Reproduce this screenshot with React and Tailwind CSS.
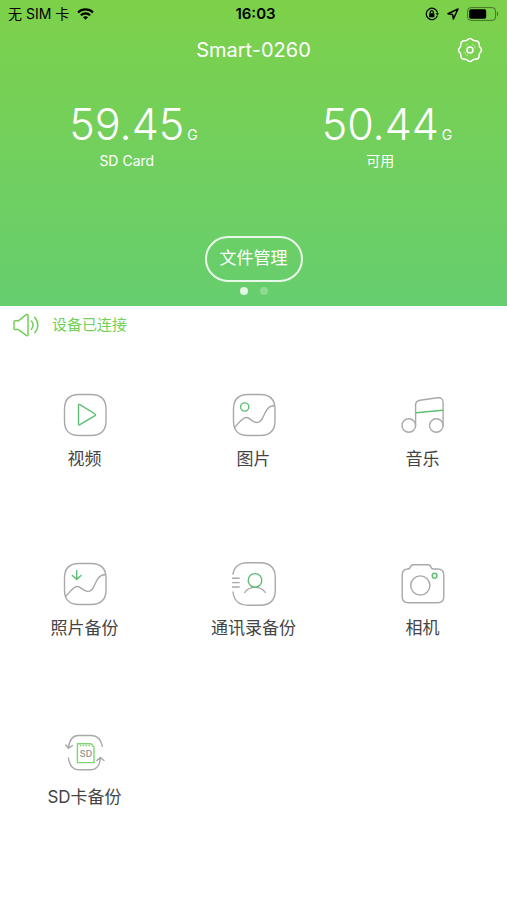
import React from "react";

const GREEN = "#5cbf72";
const GRAY = "#a9a9a9";

const STATS = [
  { value: "59.45", unit: "G", label: "SD Card" },
  { value: "50.44", unit: "G", label: "可用" },
];

const SQUIRCLE =
  "M16 1.5H28C38 1.5 43 6.5 43 16V28C43 38 38 42.5 28 42.5H16C6.5 42.5 1.5 38 1.5 28V16C1.5 6.5 6.5 1.5 16 1.5Z";
const WAVE = "M3 34C8 29 10 24.5 14.5 24.5C18 24.5 20 29.5 25 29.5C33 29.5 31 13 42.5 12.5";

const ToolIcon = ({ children }) => (
  <svg
    className="size-11"
    viewBox="0 0 44 44"
    fill="none"
    stroke={GRAY}
    strokeWidth="1.4"
    strokeLinecap="round"
    strokeLinejoin="round"
    aria-hidden="true"
  >
    {children}
  </svg>
);

const VideoIcon = () => (
  <ToolIcon>
    <path d={SQUIRCLE} />
    <path d="M15.5 12.4V31Q15.5 32.5 16.9 31.7L32 22.6Q33.2 21.8 32 21L17 11.6Q15.5 10.8 15.5 12.4Z" stroke={GREEN} />
  </ToolIcon>
);

const PictureIcon = () => (
  <ToolIcon>
    <path d={SQUIRCLE} />
    <path d={WAVE} />
    <circle cx="12.7" cy="14" r="4.1" stroke={GREEN} />
  </ToolIcon>
);

const MusicIcon = () => (
  <ToolIcon>
    <circle cx="7.8" cy="32.5" r="6.8" />
    <circle cx="35.3" cy="32.5" r="6.8" />
    <path d="M14.6 32.5V12C14.6 9 16.2 7.8 19 7.3L36.5 4.8C40 4.4 42.1 6 42.1 9.5V32.5" />
    <path d="M15.4 19.7L41.4 17.3" stroke={GREEN} />
  </ToolIcon>
);

const PhotoBackupIcon = () => (
  <ToolIcon>
    <path d={SQUIRCLE} />
    <path d={WAVE} />
    <path d="M13.7 8.8V17.4M9.4 13.4L13.7 17.6L18 13.4" stroke={GREEN} />
  </ToolIcon>
);

const ContactsIcon = () => (
  <ToolIcon>
    <path d="M1 12C2.5 4 7 0.8 16 0.8H28C38.5 0.8 43.3 5.5 43.3 16V28C43.3 38.5 38.5 43.2 28 43.2H16C7 43.2 2 38.5 1 30" />
    <path d="M0.6 16.2H7.2M0.6 20.6H7.2M0.6 25H7.2" />
    <path d="M12.7 30.5C17 23.6 29 23.6 33.3 30.5" />
    <circle cx="23" cy="18.4" r="6.8" stroke={GREEN} />
  </ToolIcon>
);

const CameraIcon = () => (
  <ToolIcon>
    <path d="M7 7C8.8 7 9 6.4 9.4 5C9.9 3.2 10.6 2.7 12.5 2.7H27C28.8 2.7 29.4 3.2 29.9 5C30.3 6.4 30.7 7 32.4 7H36.5C41 7 42.8 9 42.8 13V34.5C42.8 39 41 40.7 36.5 40.7H7.5C3 40.7 1.2 39 1.2 34.5V13C1.2 9 3 7 7 7Z" />
    <circle cx="19.3" cy="23.5" r="9.6" />
    <circle cx="33.6" cy="13.7" r="2.4" stroke={GREEN} />
  </ToolIcon>
);

const SdBackupIcon = () => (
  <ToolIcon>
    <path d="M5.4 16.8C6.4 9.5 9.5 4.5 15.5 4.5H28.5C34.5 4.5 38 9 39.4 15.4M2.8 14L5.4 17.2L9.4 14.6" />
    <path d="M5.4 27C6.4 34 10 38.8 16 38.8H27.5C33.5 38.8 37 34 37.4 27M33.8 29.6L37.4 26.4L41 29.6" />
    <path d="M14.4 12.8H28L31 16V31.6H14.4Z" stroke="#7bd86f" strokeLinejoin="miter" />
    <path d="M17 14.6H27" stroke="#7bd86f" strokeDasharray="1.4 1.4" strokeLinecap="butt" />
    <text
      x="23"
      y="25.6"
      textAnchor="middle"
      fontFamily="Inter, sans-serif"
      fontSize="9"
      fontWeight="600"
      fill="#9b9b9b"
      stroke="none"
    >
      SD
    </text>
  </ToolIcon>
);

const TOOLS = [
  { label: "视频", icon: VideoIcon },
  { label: "图片", icon: PictureIcon },
  { label: "音乐", icon: MusicIcon },
  { label: "照片备份", icon: PhotoBackupIcon },
  { label: "通讯录备份", icon: ContactsIcon },
  { label: "相机", icon: CameraIcon },
  { label: "SD卡备份", icon: SdBackupIcon },
];

const StatusBar = () => (
  <div className="grid grid-cols-3 items-center h-7 px-2 text-sm text-black">
    <div className="flex items-center gap-2">
      <span>无 SIM 卡</span>
      <svg className="w-[17px] h-3" viewBox="0 0 17 12" fill="none" stroke="#000" strokeWidth="2.1" aria-hidden="true">
        <path d="M1 4.4C5.2 0.4 11.8 0.4 16 4.4" />
        <path d="M3.8 7.2C6.4 4.8 10.6 4.8 13.2 7.2" />
        <path d="M8.5 11.8L6 9.2C7.3 7.9 9.7 7.9 11 9.2Z" fill="#000" stroke="none" />
      </svg>
    </div>
    <span className="pl-1 text-center text-[15px] font-semibold">16:03</span>
    <div className="flex items-center justify-end gap-2">
      <svg className="size-[14px]" viewBox="0 0 14 14" fill="none" stroke="#000" strokeWidth="1.2" aria-hidden="true">
        <path d="M12.4 8.6A5.7 5.7 0 1 1 12.5 5.6" />
        <path d="M10.6 6.2H14L12.4 8.6Z" fill="#000" stroke="none" />
        <rect x="4.2" y="6.2" width="5.2" height="4" rx="0.5" fill="#000" stroke="none" />
        <path d="M5.3 6.4V5.2A1.5 1.5 0 0 1 8.3 5.2V6.4" />
      </svg>
      <svg className="size-3" viewBox="0 0 12 12" fill="none" stroke="#000" strokeWidth="1.5" strokeLinejoin="round" aria-hidden="true">
        <path d="M11 1L1 5.8L5.6 6.4L6.4 11Z" />
      </svg>
      <svg className="w-8 h-[14px]" viewBox="0 0 32 14" fill="none" aria-hidden="true">
        <rect x="0.6" y="0.6" width="28" height="12.8" rx="3.4" stroke="#000" strokeOpacity="0.45" />
        <rect x="2.2" y="2.3" width="17" height="9.4" rx="1.6" fill="#000" />
        <path d="M30 4.6C31.6 5.4 31.6 8.6 30 9.4Z" fill="#000" fillOpacity="0.45" />
      </svg>
    </div>
  </div>
);

// ring with eight lobes
const GearIcon = () => (
  <svg className="size-[26px]" viewBox="0 0 26 26" fill="none" stroke="#fff" strokeWidth="1.6" strokeLinejoin="round" aria-hidden="true">
    <path d="M10.5 2.8Q13 0.2 15.5 2.8Q16.5 3.9 18.4 3.8Q22.1 3.9 22.2 7.6Q22.1 9.5 23.2 10.5Q25.8 13 23.2 15.5Q22.1 16.5 22.2 18.4Q22.1 22.1 18.4 22.2Q16.5 22.1 15.5 23.2Q13 25.8 10.5 23.2Q9.5 22.1 7.6 22.2Q3.9 22.1 3.8 18.4Q3.9 16.5 2.8 15.5Q0.2 13 2.8 10.5Q3.9 9.5 3.8 7.6Q3.9 3.9 7.6 3.8Q9.5 3.9 10.5 2.8Z" />
    <circle cx="13" cy="13" r="3" />
    <path d="M7.5 14.5A6.4 6.4 0 0 0 11 19M18.5 11.5A6.4 6.4 0 0 0 15 7M9 8.2L11 7" strokeWidth="0.6" strokeOpacity="0.7" />
  </svg>
);

const SpeakerIcon = () => (
  <svg className="w-[26px] h-6" viewBox="0 0 26 24" fill="none" stroke="#72cf58" strokeWidth="1.5" strokeLinecap="round" strokeLinejoin="round" aria-hidden="true">
    <path d="M2.2 7.8H5.4L13.2 1.6Q15 0.6 15 2.6V21.4Q15 23.4 13.2 22.4L5.4 16.6H2.2Q1 16.6 1 15.4V9Q1 7.8 2.2 7.8Z" />
    <path d="M18.4 8C20.4 10.4 20.4 13.8 18.4 16.2" />
    <path d="M21.8 4.4C25.8 8.8 25.8 15.4 21.8 19.8" />
  </svg>
);

const App = () => {
  return (
    <div className="min-h-screen bg-white font-[Inter,'Noto_Sans_CJK_SC',sans-serif]">
      <header className="bg-linear-to-b from-[#7dd149] to-[#66ce6e] text-white pb-[11px]">
        <StatusBar />

        <div className="grid grid-cols-[1fr_auto_1fr] items-center h-11 px-6">
          <h1 className="col-start-2 text-xl">Smart-0260</h1>
          <button type="button" aria-label="设置" className="justify-self-end">
            <GearIcon />
          </button>
        </div>

        <dl className="grid grid-cols-2 pt-7">
          {STATS.map((s) => (
            <div key={s.label} className="flex flex-col-reverse">
              <dt className="text-center text-sm leading-6 mt-px">{s.label}</dt>
              <dd className="grid grid-cols-[1fr_auto_1fr] items-baseline">
                <span className="col-start-2 text-[43px] leading-[48px] font-light">{s.value}</span>
                <span className="pl-[3px] text-sm">{s.unit}</span>
              </dd>
            </div>
          ))}
        </dl>

        <div className="flex flex-col items-center gap-[5px] pt-[63px]">
          <button type="button" className="h-[46px] px-[13px] rounded-full border-2 border-white/85 text-[17px]">
            文件管理
          </button>
          <div className="flex gap-3">
            <span className="size-2 rounded-full bg-white/80" />
            <span className="size-2 rounded-full bg-white/25" />
          </div>
        </div>
      </header>

      <main>
        <p className="flex items-center gap-[13px] h-[38px] px-[13px] text-[15px] text-[#72cf58]">
          <SpeakerIcon />
          设备已连接
        </p>

        <div className="grid grid-cols-3">
          {TOOLS.map(({ label, icon: Icon }) => (
            <button
              key={label}
              type="button"
              className="aspect-square flex flex-col items-center justify-center gap-[10px] pt-[6px] text-[17px] leading-6 text-[#444]"
            >
              <Icon />
              {label}
            </button>
          ))}
        </div>
      </main>
    </div>
  );
};

export default App;
